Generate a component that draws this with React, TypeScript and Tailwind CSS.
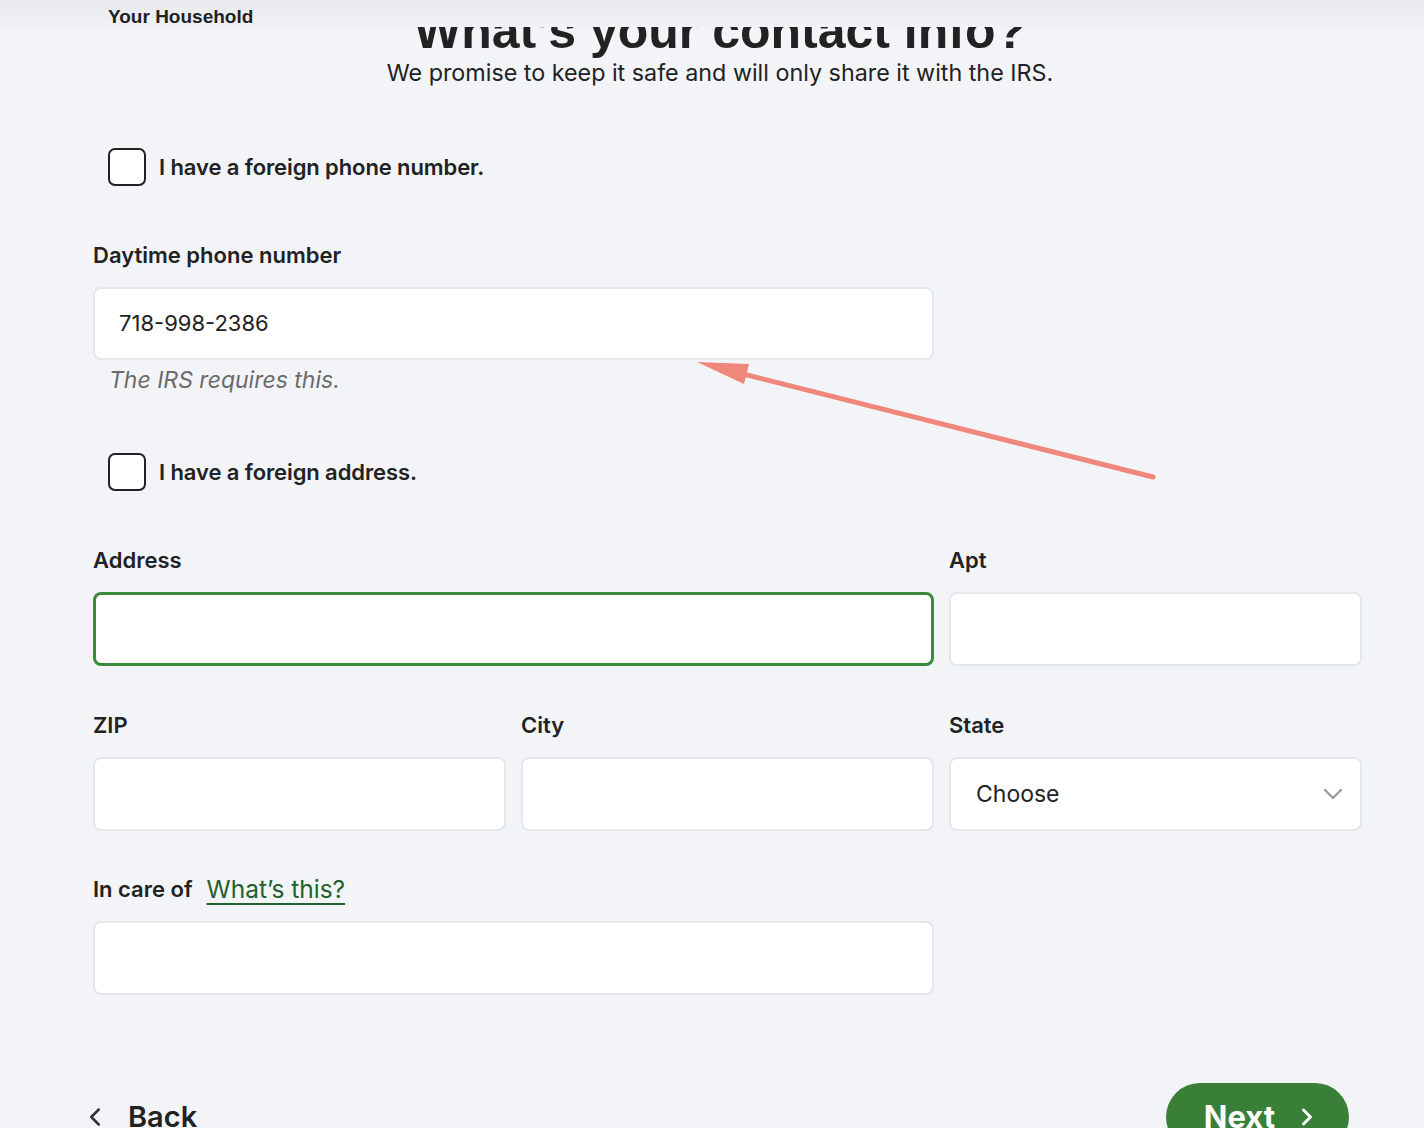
import React from "react";
import { ChevronDown, ChevronLeft, ChevronRight } from "lucide-react";

const font = { fontFamily: "Inter, 'Noto Sans', sans-serif" };

const Checkbox: React.FC<{ label: string; className?: string }> = ({ label, className = "" }) => (
  <label className={`flex items-center ml-[15px] h-[38px] ${className}`}>
    <span className="w-[38px] h-[38px] rounded-[7px] border-[2.5px] border-[#222222] bg-white shrink-0" />
    <span className="ml-[13px] text-[22px] font-semibold text-[#222222] tracking-[-0.1px]">{label}</span>
  </label>
);

const Field: React.FC<{ label: React.ReactNode; span?: string; focused?: boolean; children?: React.ReactNode }> = ({
  label,
  span = "",
  focused = false,
  children,
}) => (
  <div className={span}>
    <div className="h-[28px] flex items-center text-[22px] font-semibold text-[#222222]">{label}</div>
    <div
      className={`mt-[18px] h-[74px] bg-white rounded-[8px] flex items-center px-[25px] text-[23px] text-[#222222] ${
        focused ? "border-[3px] border-[#3a8a3a]" : "border-2 border-[#e3e8eb]"
      }`}
    >
      {children}
    </div>
  </div>
);

export default function App() {
  return (
    <div className="relative h-[1128px] overflow-hidden bg-[#f3f4f8]" style={font}>
      {/* sticky header overlapping title */}
      <div className="absolute top-0 left-0 right-0 h-[27px] z-10 bg-gradient-to-b from-[#e7e9ed] to-[#f1f2f6]">
        <span
          className="absolute left-[108px] top-[6px] text-[19px] font-bold text-[#222222] leading-[22px]"
          style={{ fontFamily: "'Liberation Sans', Arial, sans-serif" }}
        >
          Your Household
        </span>
      </div>

      <h1
        className="mt-[6px] pl-[16px] h-[50px] text-center text-[50px] leading-[50px] font-bold text-[#222222]"
        style={{ fontFamily: "'Liberation Sans', Arial, sans-serif" }}
      >
        What’s your contact info?
      </h1>
      <p className="mt-[3px] pl-[16px] h-[28px] leading-[28px] text-center text-[23.3px] text-[#222222]">
        We promise to keep it safe and will only share it with the IRS.
      </p>

      <div className="ml-[93px] w-[1269px]">
        <Checkbox label="I have a foreign phone number." className="mt-[61px]" />

        <div className="mt-[55px] w-[841px]">
          <div className="h-[28px] flex items-center text-[22px] font-semibold text-[#222222]">Daytime phone number</div>
          <div className="mt-[18px] h-[73px] bg-white rounded-[8px] border-2 border-[#e3e8eb] flex items-center px-[24px] text-[22px] text-[#222222]">
            718-998-2386
          </div>
          <div className="mt-[6px] h-[28px] leading-[28px] pl-[16px] text-[23px] italic text-[#6b6b6b]">
            The IRS requires this.
          </div>
        </div>

        <Checkbox label="I have a foreign address." className="mt-[59px]" />

        <div className="mt-[55px] grid grid-cols-3 gap-x-[15px]">
          <Field label="Address" span="col-span-2" focused />
          <Field label="Apt" />
        </div>

        <div className="mt-[45px] grid grid-cols-3 gap-x-[15px]">
          <Field label="ZIP" />
          <Field label="City" />
          <Field label="State">
            <span className="flex-1">Choose</span>
            <ChevronDown size={32} strokeWidth={1.8} className="text-[#9b9b9b] -mr-[14px]" />
          </Field>
        </div>

        <div className="mt-[44px] grid grid-cols-3 gap-x-[15px]">
          <Field
            span="col-span-2"
            label={
              <>
                <span>In care of</span>
                <a
                  href="#"
                  className="ml-[14px] text-[24.5px] font-normal text-[#23612c] underline decoration-2 underline-offset-[5px]"
                >
                  What’s this?
                </a>
              </>
            }
          />
        </div>

        <div className="mt-[88px] -ml-[8px] w-[1264px] h-[68px] flex items-center justify-between">
          <button className="flex items-center text-[29px] font-semibold text-[#222222]">
            <ChevronLeft size={30} strokeWidth={2} className="text-[#333333] -ml-[5px]" />
            <span className="ml-[18px]">Back</span>
          </button>
          <button className="h-[68px] rounded-full bg-[#3a7f37] pl-[38px] pr-[28px] flex items-center text-[31px] font-bold text-white">
            <span>Next</span>
            <ChevronRight size={28} strokeWidth={2.5} className="ml-[18px]" />
          </button>
        </div>
      </div>

      {/* annotation arrow */}
      <svg className="absolute left-0 top-0 pointer-events-none" width="1424" height="1128">
        <line x1="1153" y1="477" x2="735" y2="372" stroke="#f0877b" strokeWidth="5" strokeLinecap="round" />
        <polygon points="697,362 749,364 744,384" fill="#f0877b" />
      </svg>
    </div>
  );
}
